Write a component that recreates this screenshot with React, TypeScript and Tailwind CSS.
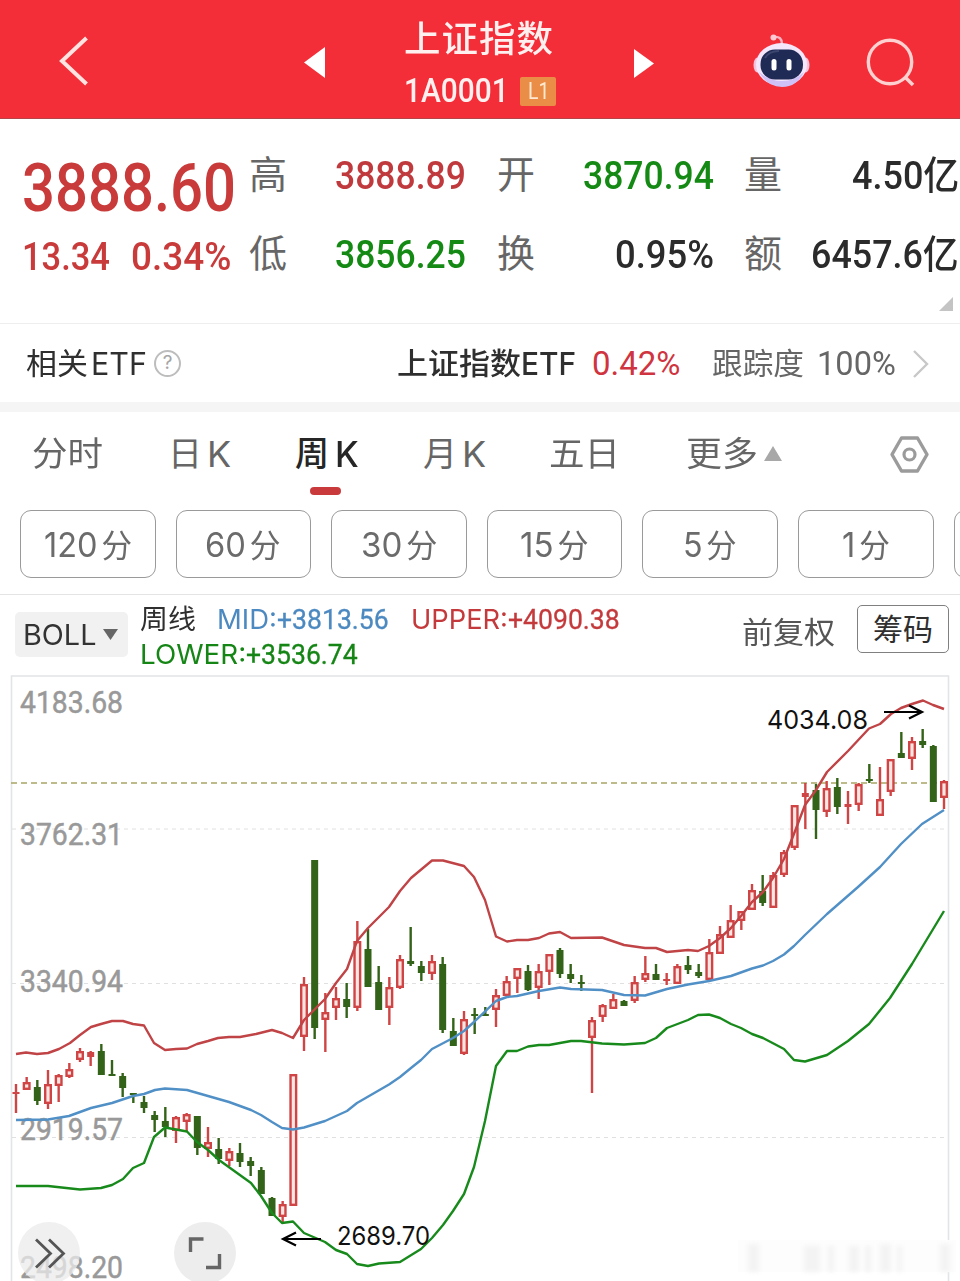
import React, { useLayoutEffect, useRef, useState } from "react";

/* ── DATA ──────────────────────────────────────────────────────────────────── */
// [up, high, bodyTop, bodyBottom, low] in chart units
type Candle = [number, number, number, number, number];

const candles: Candle[] = [
  [1, 1084, 1092, 1094, 1113],
  [1, 1077, 1082, 1090, 1090],
  [0, 1080, 1087, 1101, 1105],
  [1, 1070, 1084, 1104, 1109],
  [1, 1074, 1075, 1086, 1102],
  [1, 1063, 1069, 1077, 1078],
  [1, 1048, 1051, 1060, 1062],
  [1, 1051, 1052, 1057, 1066],
  [0, 1044, 1051, 1075, 1075],
  [0, 1060, 1074, 1076, 1076],
  [0, 1073, 1076, 1088, 1097],
  [0, 1093, 1093, 1095, 1103],
  [0, 1096, 1102, 1108, 1113],
  [0, 1111, 1115, 1120, 1132],
  [0, 1107, 1121, 1127, 1137],
  [1, 1116, 1117, 1131, 1143],
  [1, 1113, 1114, 1122, 1132],
  [0, 1116, 1116, 1148, 1155],
  [1, 1127, 1142, 1149, 1157],
  [0, 1138, 1149, 1159, 1164],
  [1, 1148, 1151, 1161, 1166],
  [0, 1143, 1153, 1162, 1167],
  [0, 1157, 1161, 1166, 1176],
  [0, 1167, 1170, 1194, 1194],
  [0, 1197, 1198, 1216, 1216],
  [1, 1201, 1204, 1217, 1223],
  [1, 1074, 1074, 1206, 1206],
  [1, 977, 984, 1037, 1051],
  [0, 860, 860, 1028, 1039],
  [1, 993, 1012, 1020, 1052],
  [1, 987, 998, 1008, 1020],
  [0, 983, 999, 1007, 1018],
  [1, 921, 941, 1008, 1011],
  [0, 929, 949, 987, 987],
  [0, 966, 982, 1010, 1010],
  [1, 977, 987, 1008, 1025],
  [1, 955, 959, 988, 989],
  [0, 927, 961, 964, 966],
  [0, 961, 966, 973, 981],
  [1, 955, 961, 974, 980],
  [0, 957, 964, 1030, 1033],
  [0, 1018, 1031, 1046, 1046],
  [1, 1011, 1019, 1054, 1055],
  [0, 1008, 1014, 1016, 1034],
  [0, 1007, 1014, 1016, 1016],
  [1, 989, 995, 1010, 1027],
  [1, 976, 981, 996, 996],
  [1, 968, 968, 979, 993],
  [0, 965, 971, 990, 991],
  [1, 964, 971, 988, 999],
  [1, 954, 954, 972, 985],
  [0, 948, 950, 974, 978],
  [0, 964, 974, 979, 983],
  [0, 975, 982, 984, 991],
  [1, 1017, 1020, 1038, 1093],
  [1, 1004, 1005, 1017, 1022],
  [1, 994, 999, 1009, 1009],
  [0, 1000, 1001, 1006, 1006],
  [1, 976, 982, 1001, 1003],
  [1, 956, 973, 980, 982],
  [0, 964, 974, 980, 980],
  [1, 973, 979, 981, 985],
  [1, 964, 966, 984, 984],
  [0, 956, 965, 970, 974],
  [0, 964, 972, 976, 978],
  [1, 939, 952, 980, 980],
  [1, 926, 934, 954, 954],
  [1, 905, 920, 938, 938],
  [1, 911, 911, 921, 930],
  [1, 884, 890, 910, 910],
  [0, 875, 891, 903, 906],
  [1, 872, 875, 908, 908],
  [1, 850, 852, 875, 877],
  [1, 805, 805, 848, 850],
  [1, 783, 793, 797, 829],
  [0, 784, 790, 810, 839],
  [1, 781, 788, 812, 817],
  [0, 778, 787, 807, 814],
  [1, 791, 804, 807, 824],
  [1, 783, 784, 805, 811],
  [0, 764, 779, 781, 783],
  [1, 767, 799, 816, 816],
  [1, 759, 759, 792, 796],
  [0, 732, 753, 758, 758],
  [1, 737, 741, 759, 770],
  [0, 729, 741, 745, 748],
  [0, 745, 746, 802, 802],
  [1, 780, 781, 798, 809],
];

const upper =
  "16,1054 26,1052.5 37,1054 48,1053 59,1049 70,1043 80,1035 91,1027 101,1024 112,1021 123,1021 133,1024 144,1025.5 154,1043 165,1050 176,1049 187,1048.5 197,1044 208,1041 218,1038 229,1037 240,1037 256,1034 272,1030 282,1033 293,1038 304,1020 314,1010 325,999 336,983 347,969 357,941 368,928 378,918 389,907 400,891 411,878 432,860.5 443,860.5 464,866 474,877 485,900 496,936.5 507,941.5 517,940 528,940 539,938 549,933.5 560,932 571,938 602,937.5 624,945 645,948 656,948 667,952 688,950 698,951 709,946 720,938 731,928 741,916 752,902 763,892 773,878 784,859 794.7,832 805,805 816,790 827,772 848,751 869,728.5 880,724 891,714 901,708 912,704 923,700.5 933,705 944,709";
const mid =
  "16,1120 48,1119.5 69,1116 91,1108 112,1103 133,1096 144,1094 155,1090 165,1088.5 187,1090 208,1096 229,1102 240,1106 251,1110 261,1115 272,1122 282,1128 293,1129.5 304,1127.5 325,1121 347,1111 357,1103 389,1084.5 400,1077 411,1068 421,1060 432,1049 453,1038 464,1031 474,1022 496,1001 507,997 517,996 539,991 560,987.5 571,989 602,990 624,995 645,995.5 667,989 688,984.5 709,981 731,976 752,968.5 763,965.5 773,961 784,954.5 794,946 805,935 827,914 858,887 880,867 901,844 922,824 944,810";
const lower =
  "16,1186 48,1186 80,1189.5 101,1188 112,1185 123,1179 133,1168 144,1163 154,1137 165,1127.5 187,1131.5 197,1142 208,1150 219,1160 251,1183 261,1196 272,1213 282,1223 293,1221.5 304,1233 325,1242 336,1250 347,1254 357,1264 368,1266 379,1263.5 400,1262 421,1249 432,1238 443,1225 453,1211 464,1194 474,1167 485,1121 496,1066 507,1051 517,1051 528,1046.5 539,1045 549,1045 571,1041 581,1041 602,1043.5 624,1044.5 645,1043 656,1038 667,1028 688,1020 698,1015 709,1014.5 720,1018 731,1024 741,1028 752,1034 763,1038 784,1049 794,1060 805,1061.5 827,1055 848,1041 869,1024 890,998 912,964 944,911";

const priceLabels = [
  { text: "4183.68", y: 713 },
  { text: "3762.31", y: 845 },
  { text: "3340.94", y: 992 },
  { text: "2919.57", y: 1139.5 },
  { text: "2498.20", y: 1278 },
];

const minutes = ["120", "60", "30", "15", "5", "1"];
const minuteWidths = ["w-[88px]", "w-[76px]", "w-[76px]", "w-[69px]", "w-[54px]", "w-[48px]"];

/* ── TEXT ──────────────────────────────────────────────────────────────────── */
const din = "font-['Roboto','Noto_Sans_CJK_SC',sans-serif]";
const sans = "font-['Inter','Noto_Sans_CJK_SC',sans-serif]";

interface FitProps {
  className: string;
  children: React.ReactNode;
}

// Condenses its text so that it fills the width of the box
const Fit: React.FC<FitProps> = ({ className, children }) => {
  const boxRef = useRef<HTMLSpanElement>(null);
  const textRef = useRef<HTMLSpanElement>(null);
  const [scale, setScale] = useState(1);

  useLayoutEffect(() => {
    if (!boxRef.current || !textRef.current) return;
    setScale(boxRef.current.clientWidth / textRef.current.offsetWidth);
  }, [children]);

  return (
    <span ref={boxRef} className={`block shrink-0 whitespace-nowrap ${className}`}>
      <span
        ref={textRef}
        className="inline-block origin-left align-top"
        style={{ transform: `scaleX(${scale})` }}
      >
        {children}
      </span>
    </span>
  );
};

/* ── HEADER ────────────────────────────────────────────────────────────────── */
const Robot = () => (
  <svg className="ml-[99px] mt-[33px] h-[55px] w-[57px] shrink-0" viewBox="0 0 57 55">
    <path d="M21 4q8-1 8 7" fill="none" stroke="#f6b4c4" strokeWidth="2.4" />
    <circle cx="20.5" cy="4.5" r="3" fill="#ffc9d3" />
    <ellipse cx="4.5" cy="32" rx="4" ry="7.5" fill="#f7c3dc" />
    <ellipse cx="52.500" cy="32" rx="4" ry="7.500" fill="#f5c4dc" />
    <ellipse cx="28.500" cy="31.500" rx="25.500" ry="21.500" fill="#f4e6fb" />
    <path d="M6 39q8 15 23 15t22-15q-9 9-22 9T6 39" fill="#cfc0f7" />
    <rect x="7.500" y="16.500" width="42.500" height="30" rx="14.500" fill="#1f2a55" />
    <path d="M12 25q4-7 14-7" fill="none" stroke="#3c466f" strokeWidth="2" />
    <rect x="18.500" y="26" width="5" height="11.500" rx="2.500" fill="#fff" />
    <rect x="33.500" y="26" width="5" height="11.500" rx="2.500" fill="#fff" />
  </svg>
);

const Header = () => (
  <header className="flex h-[119px] items-start border-b border-[#b5434a] bg-[#f32e38] text-[#fff0f0]">
    <svg className="ml-[58px] mt-[35px] h-[52px] w-8 shrink-0" viewBox="0 0 32 52">
      <path d="M28.500 3L4 26l24.500 23" fill="none" stroke="#ffe3e1" strokeWidth="4" />
    </svg>
    <svg className="ml-[214px] mt-[47px] h-[31px] w-[22px] shrink-0" viewBox="0 0 22 31">
      <path d="M21 0v31L0 15.500z" fill="#fff" />
    </svg>
    <div className="ml-[78px] w-[152px] shrink-0 pt-[17px]">
      <Fit className={`w-[150px] text-[36px] leading-[46px] font-medium tracking-[1px] ${din}`}>上证指数</Fit>
      <div className="mt-[6px] flex items-center">
        <Fit className={`w-[105px] text-[33px] leading-[44px] font-medium ${din}`}>1A0001</Fit>
        <span className="ml-[11px] flex h-[29px] w-9 shrink-0 items-center justify-center rounded-[2px] bg-[#e98d47]">
          <Fit className={`w-[21px] text-[24px] leading-[29px] text-[#ffe9d0] ${din}`}>L1</Fit>
        </span>
      </div>
    </div>
    <svg className="ml-[78px] mt-[49px] h-[29px] w-5 shrink-0" viewBox="0 0 20 29">
      <path d="M0 0v29l20-14.500z" fill="#fff" />
    </svg>
    <Robot />
    <svg className="ml-[56px] mt-[38px] h-[50px] w-[50px] shrink-0" viewBox="0 0 50 50">
      <circle cx="24" cy="24" r="21.700" fill="none" stroke="#ffd0d0" strokeWidth="3.400" />
      <path d="M39 39l8 8" stroke="#ffd0d0" strokeWidth="3.600" />
    </svg>
  </header>
);

/* ── QUOTE ─────────────────────────────────────────────────────────────────── */
const label = `w-[38px] text-[38px] leading-[48px] text-[#666] ${din}`;
const value = `text-[39px] leading-[50px] font-medium ${din}`;

const Quote = () => (
  <section className="relative flex h-[205px] border-b border-[#eee]">
    <div className="ml-[22px] w-[227px] shrink-0 pt-[35px] text-[#c93a3a]">
      <Fit className={`w-[214px] text-[67px] leading-[68px] font-medium ${din}`}>3888.60</Fit>
      <div className="mt-[11px] flex">
        <Fit className={`w-[88px] text-[38px] leading-[48px] font-medium ${din}`}>13.34</Fit>
        <Fit className={`ml-[21px] w-[100px] text-[38px] leading-[48px] font-medium ${din}`}>0.34%</Fit>
      </div>
    </div>
    <div className="flex shrink-0 flex-col gap-[29px] pt-[32px]">
      <div className="flex">
        <Fit className={label}>高</Fit>
        <Fit className={`ml-[48px] w-[131px] text-[#c0393d] ${value}`}>3888.89</Fit>
        <Fit className={`ml-[31px] ${label}`}>开</Fit>
        <Fit className={`ml-[48px] w-[131px] text-[#148a14] ${value}`}>3870.94</Fit>
        <Fit className={`ml-[30px] ${label}`}>量</Fit>
        <Fit className={`ml-[70px] w-[107px] text-[#2b2b2b] ${value}`}>4.50亿</Fit>
      </div>
      <div className="flex">
        <Fit className={label}>低</Fit>
        <Fit className={`ml-[48px] w-[131px] text-[#148a14] ${value}`}>3856.25</Fit>
        <Fit className={`ml-[31px] ${label}`}>换</Fit>
        <Fit className={`ml-[80px] w-[99px] text-[#2b2b2b] ${value}`}>0.95%</Fit>
        <Fit className={`ml-[30px] ${label}`}>额</Fit>
        <Fit className={`ml-[29px] w-[148px] text-[#2b2b2b] ${value}`}>6457.6亿</Fit>
      </div>
    </div>
    <svg className="absolute right-[7px] top-[178px] h-3.5 w-3.5" viewBox="0 0 14 14">
      <path d="M14 0v14H0z" fill="#c4c4c4" />
    </svg>
  </section>
);

const EtfRow = () => (
  <section className="flex h-[78px] items-center pt-px text-[#2f2f2f]">
    <Fit className={`ml-[26px] w-[62px] text-[30px] leading-[44px] ${din}`}>相关</Fit>
    <Fit className={`ml-[3px] w-[56px] text-[31px] leading-[44px] ${sans}`}>ETF</Fit>
    <span className={`ml-[7px] flex size-[27px] shrink-0 items-center justify-center rounded-full border-2 border-[#bdbdbd] text-[19px] text-[#a5a5a5] ${sans}`}>
      ?
    </span>
    <Fit className={`ml-[216px] w-[124px] text-[30px] leading-[44px] font-medium ${din}`}>上证指数</Fit>
    <Fit className={`w-[55px] text-[31px] leading-[44px] font-medium ${sans}`}>ETF</Fit>
    <Fit className={`ml-[16px] w-[89px] text-[33px] leading-[44px] text-[#cf3440] ${din}`}>0.42%</Fit>
    <Fit className={`ml-[31px] w-[92px] text-[30px] leading-[44px] text-[#666] ${din}`}>跟踪度</Fit>
    <Fit className={`ml-[13px] w-[79px] text-[33px] leading-[44px] text-[#666] ${din}`}>100%</Fit>
    <svg className="ml-[16px] h-[30px] w-[18px] shrink-0" viewBox="0 0 18 30">
      <path d="M2 2l13 13L2 28" fill="none" stroke="#c8c8c8" strokeWidth="2.400" />
    </svg>
  </section>
);

/* ── TABS ──────────────────────────────────────────────────────────────────── */
const tab = `text-[34px] leading-[49px] ${din}`;
const tabK = `w-[24px] text-[36px] leading-[49px] ${sans}`;

const Tabs = () => (
  <nav className="flex h-[98px] items-start pt-[18px] text-[#666]">
    <Fit className={`ml-[32px] w-[71px] ${tab}`}>分时</Fit>
    <div className="ml-[65px] flex">
      <Fit className={`w-[34px] ${tab}`}>日</Fit>
      <Fit className={`ml-[5px] ${tabK}`}>K</Fit>
    </div>
    <div className="ml-[64px] text-[#262626]">
      <div className="flex">
        <Fit className={`w-[34px] font-medium ${tab}`}>周</Fit>
        <Fit className={`ml-[6px] font-medium ${tabK}`}>K</Fit>
      </div>
      <div className="ml-[15px] mt-[8px] h-2 w-[31px] rounded-full bg-[#c93a3c]" />
    </div>
    <div className="ml-[64px] flex">
      <Fit className={`w-[34px] ${tab}`}>月</Fit>
      <Fit className={`ml-[5px] ${tabK}`}>K</Fit>
    </div>
    <Fit className={`ml-[63px] w-[71px] ${tab}`}>五日</Fit>
    <Fit className={`ml-[66px] w-[72px] ${tab}`}>更多</Fit>
    <svg className="ml-[6px] mt-[16px] h-[15px] w-[18px] shrink-0" viewBox="0 0 18 15">
      <path d="M9 0l9 15H0z" fill="#a8a8a8" />
    </svg>
    <svg className="ml-[108px] mt-[6px] h-[37px] w-[39px] shrink-0" viewBox="0 0 39 37">
      <path
        d="M11.500 2h16L37 18.500 27.500 35h-16L2 18.500z"
        fill="none"
        stroke="#9b9b9b"
        strokeWidth="3.400"
        strokeLinejoin="round"
      />
      <circle cx="19.500" cy="18.500" r="5.500" fill="none" stroke="#9b9b9b" strokeWidth="3.200" />
    </svg>
  </nav>
);

const Minutes = () => (
  <div className="flex h-[85px] gap-5 overflow-hidden border-b border-[#e4e4e4] pl-[20px] text-[#6b6b6b]">
    {minutes.map((m, i) => (
      <button
        key={m}
        className="flex h-[68px] w-[135.600px] shrink-0 items-center justify-center rounded-[11px] border border-[#9a9a9a] pt-0.5"
      >
        <Fit className={`text-[34px] leading-[50px] ${minuteWidths[i]} ${sans}`}>
          {m}
          <span className="ml-1 text-[32px]">分</span>
        </Fit>
      </button>
    ))}
    <button className="h-[68px] w-[136px] shrink-0 rounded-[11px] border border-[#9a9a9a]" />
  </div>
);

/* ── INDICATOR BAR ─────────────────────────────────────────────────────────── */
const ind = "text-[27px] leading-[34px]";
const num = `w-[112px] text-[28px] leading-[34px] [-webkit-text-stroke:0.3px] ${din}`;

const IndicatorBar = () => (
  <div className="flex h-[80px] items-start">
    <div className="ml-[15px] mt-[17px] flex h-[45px] w-[113px] shrink-0 items-center rounded-[5px] bg-[#f1f1f1] pl-2 text-[#333]">
      <Fit className={`w-[73px] pt-0.5 text-[28px] leading-[45px] ${sans}`}>BOLL</Fit>
      <svg className="ml-[7px] h-[11px] w-[15px] shrink-0" viewBox="0 0 15 11">
        <path d="M0 0h15L7.500 11z" fill="#666" />
      </svg>
    </div>
    <div className="ml-[12px] w-[483px] shrink-0 pt-[8px]">
      <div className="flex">
        <Fit className={`w-[56px] text-[#2f2f2f] ${ind} ${din}`}>周线</Fit>
        <Fit className={`ml-[21px] w-[60px] text-[#4b89c0] ${ind} ${sans}`}>MID:</Fit>
        <Fit className={`text-[#4b89c0] ${num}`}>+3813.56</Fit>
        <Fit className={`ml-[22px] w-[97px] text-[#c43a3c] ${ind} ${sans}`}>UPPER:</Fit>
        <Fit className={`text-[#c43a3c] ${num}`}>+4090.38</Fit>
      </div>
      <div className="mt-px flex">
        <Fit className={`w-[106px] text-[#158515] ${ind} ${sans}`}>LOWER:</Fit>
        <Fit className={`text-[#158515] ${num}`}>+3536.74</Fit>
      </div>
    </div>
    <Fit className={`ml-[119px] mt-[15px] w-[93px] text-[30px] leading-[46px] text-[#555] ${din}`}>前复权</Fit>
    <button className="ml-[22px] mt-[10px] flex h-[48px] w-[92px] shrink-0 items-center justify-center rounded-[5px] border border-[#808080] pt-0.5 text-[#2f2f2f]">
      <Fit className={`w-[60px] text-[30px] leading-[44px] ${din}`}>筹码</Fit>
    </button>
  </div>
);

/* ── CHART ─────────────────────────────────────────────────────────────────── */
const CandleShape = ({ c, x }: { c: Candle; x: number }) => {
  const [up, high, top, bottom, low] = c;
  const color = up ? "#cf4545" : "#336318";
  const h = bottom - top;
  return (
    <g stroke={color} strokeWidth="2.400">
      {high < top && <path d={`M${x} ${high}V${top}`} />}
      {low > bottom && <path d={`M${x} ${bottom}V${low}`} />}
      {up && h > 5 ? (
        <rect x={x - 2.8} y={top + 1.2} width="5.6" height={h - 2.4} fill="#ffe6e3" />
      ) : (
        <rect x={x - 3.5} y={top} width="7" height={h} fill={color} strokeWidth="0" />
      )}
    </g>
  );
};

const Chart = () => (
  <div className="relative h-[606px]">
    <svg className="block h-[606px] w-[960px]" viewBox="0 675 960 606" fill="none">
      <path d="M11.500 1290V676H948.500V1290" stroke="#e2e4e6" strokeWidth="1.600" />
      <path d="M12 829H948M12 983.500H948M12 1137.500H948" stroke="#e0e0e0" strokeDasharray="4 4" />
      <path d="M11 783H948" stroke="#a9a566" strokeWidth="1.600" strokeDasharray="6 4" />
      <g className="font-['Roboto',sans-serif] text-[32px]" fill="#999" stroke="#999" strokeWidth="0.500">
        {priceLabels.map((p) => (
          <text key={p.text} x="20" y={p.y} textLength="103" lengthAdjust="spacingAndGlyphs">
            {p.text}
          </text>
        ))}
      </g>
      {candles.map((c, i) => (
        <CandleShape key={i} c={c} x={16 + (i * 928) / 87} />
      ))}
      <g strokeWidth="2.400" strokeLinejoin="round">
        <polyline points={mid} stroke="#5090c6" />
        <polyline points={upper} stroke="#c04346" />
        <polyline points={lower} stroke="#188a1c" />
      </g>
      <g stroke="#000" strokeWidth="2.200">
        <path d="M884 712H922M909 705.500L922 712 909 718.500" />
        <path d="M321 1239H283M296 1232.500L283 1239 296 1245.500" />
      </g>
      <g className="font-['Inter',sans-serif] text-[26px]" fill="#111">
        <text x="767" y="729" textLength="101" lengthAdjust="spacingAndGlyphs">
          4034.08
        </text>
        <text x="337" y="1245" textLength="93" lengthAdjust="spacingAndGlyphs">
          2689.70
        </text>
      </g>
      <rect x="738" y="1240" width="218" height="32" fill="#fdfdfd" />
      <g fill="#f3f3f3" className="blur-[2px]">
        <rect x="748" y="1244" width="11" height="28" />
        <rect x="804" y="1246" width="16" height="26" />
        <rect x="828" y="1246" width="6" height="26" />
        <rect x="849" y="1246" width="10" height="26" />
        <rect x="865" y="1246" width="6" height="26" />
        <rect x="880" y="1244" width="11" height="28" />
        <rect x="897" y="1246" width="5" height="26" />
        <rect x="940" y="1244" width="10" height="28" />
      </g>
    </svg>
    <button className="absolute left-[18px] top-[547px] size-[62px] rounded-full bg-[#ebebeb]/75">
      <svg className="size-[62px]" viewBox="0 0 62 62" fill="none" stroke="#555" strokeWidth="2.800">
        <path d="M18 17.500L32.500 31.500 18 45.500M31 17.500L45.500 31.500 31 45.500" />
      </svg>
    </button>
    <button className="absolute left-[174px] top-[547px] size-[62px] rounded-full bg-[#ededed]">
      <svg className="size-[62px]" viewBox="0 0 62 62" fill="none" stroke="#666" strokeWidth="3.400">
        <path d="M16.500 30V17H29.500M45.500 32V45.500H32" />
      </svg>
    </button>
  </div>
);

export default function App() {
  return (
    <main className="h-[1281px] w-[960px] overflow-hidden bg-white">
      <Header />
      <Quote />
      <EtfRow />
      <div className="h-[10px] bg-[#f5f5f5]" />
      <Tabs />
      <Minutes />
      <IndicatorBar />
      <Chart />
    </main>
  );
}
